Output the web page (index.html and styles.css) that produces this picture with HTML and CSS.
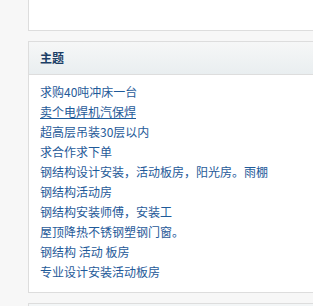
FILE: index.html
```html
<!DOCTYPE html>
<html>
    <head>
        <meta charset="utf-8"/>
        <link rel="stylesheet" href="styles.css">
    </head>
    <body>
        <div class="page">
            <!-- block above, only its bottom shows -->
            <div class="box box-top"></div>

            <!-- topic list -->
            <div class="box">
                <div class="box-head">主题</div>
                <ul class="topics">
                    <li><a href="#">求购40吨冲床一台</a></li>
                    <li><a href="#" class="hover">卖个电焊机汽保焊</a></li>
                    <li><a href="#">超高层吊装30层以内</a></li>
                    <li><a href="#">求合作求下单</a></li>
                    <li><a href="#">钢结构设计安装，活动板房，阳光房。雨棚</a></li>
                    <li><a href="#">钢结构活动房</a></li>
                    <li><a href="#">钢结构安装师傅，安装工</a></li>
                    <li><a href="#">屋顶降热不锈钢塑钢门窗。</a></li>
                    <li><a href="#">钢结构 活动 板房</a></li>
                    <li><a href="#">专业设计安装活动板房</a></li>
                </ul>
            </div>

            <!-- next block, only its top shows -->
            <div class="box box-next"></div>
        </div>
    </body>
</html>
```

FILE: styles.css
```css
/* page background */
html, body {
    margin: 0;
    overflow: hidden;
}
body {
    background-color: #f7f7f7;
    font-family: "Noto Sans CJK SC", "Liberation Sans", sans-serif;
    font-size: 12px;
}

.page {
    padding-left: 28px;
}

/* white boxes, they run past the right edge */
.box {
    width: 340px;
    background-color: #ffffff;
    border: 1px solid #dddddd;
    margin-bottom: 10px;
}
.box-top {
    border-top: none;
    height: 30px;
}
.box-next {
    height: 20px;
    background-color: #f3f6f7;
}

/* header strip of a box */
.box-head {
    height: 32px;
    line-height: 32px;
    padding-left: 11px;
    background: linear-gradient(#f6f7f7, #e9eef0);
    border-bottom: 1px solid #dddddd;
    font-weight: bold;
    color: #1c3f66;
}

/* list of topics */
.topics {
    list-style: none;
    margin: 0;
    padding: 7px 0 10px 11px;
}
.topics li {
    line-height: 20px;
    height: 20px;
}
.topics a {
    color: #1f5a99;
    text-decoration: none;
}
.topics a.hover {
    text-decoration: underline;
}
```
